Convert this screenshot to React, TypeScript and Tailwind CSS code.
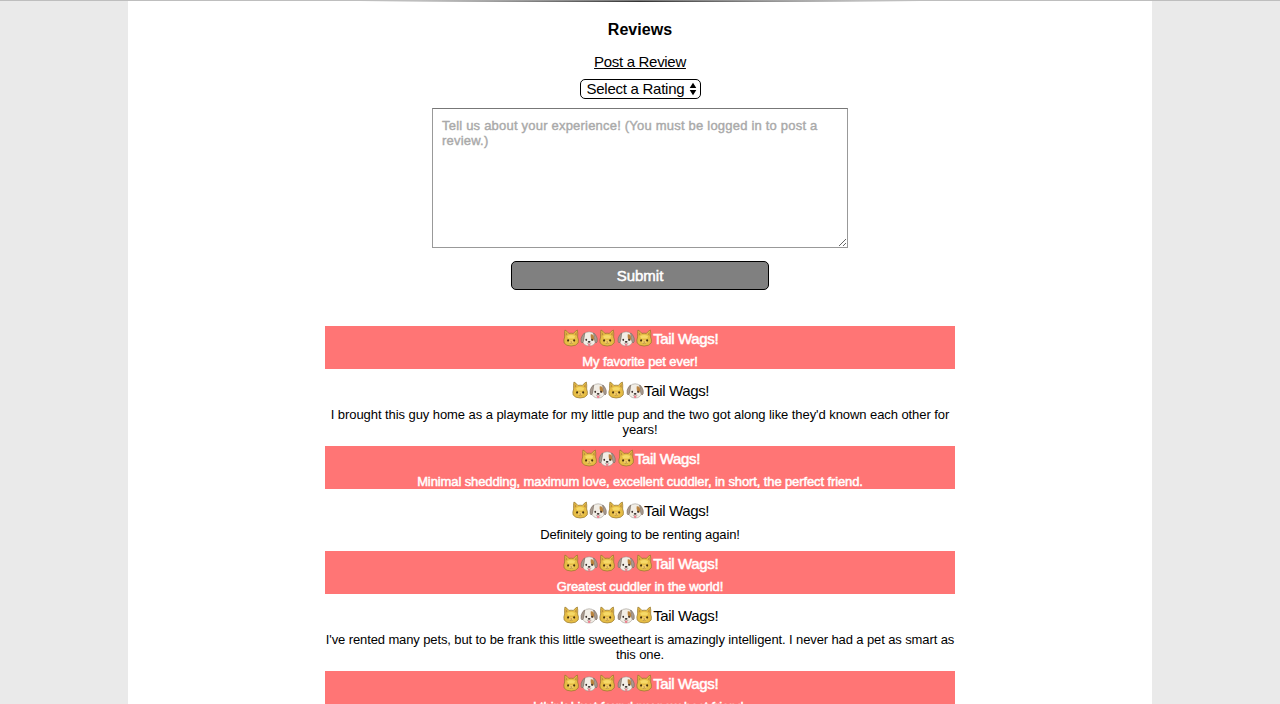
function Cat() {
  return (
    <svg viewBox="0 0 18 18" className="-mt-0.5 h-[18px] w-[18.3px] shrink-0" aria-hidden="true">
      <path d="M2.8 1Q5 2 6.7 4.4Q9 4 11.3 4.4Q13 2 15.2 1Q15.9 4 15.5 8Q16.8 11 16 14Q14 17 9 17Q4 17 2 14Q1.2 11 2.5 8Q2.1 4 2.8 1Z" fill="#e6bd45" stroke="#94742c" strokeWidth=".7" />
      <path d="M3.5 2.8L5.4 5.2L3.5 7ZM14.5 2.8L12.6 5.2L14.5 7Z" fill="#bd8e3d" />
      <path d="M5 7Q9 4.8 13 7L12 9.5H6Z" fill="#f6d967" />
      <ellipse cx="6" cy="11.4" rx="1" ry="1.2" fill="#46310f" />
      <ellipse cx="12" cy="11.4" rx="1" ry="1.2" fill="#46310f" />
      <ellipse cx="9" cy="13" rx="2.5" ry="1.9" fill="#f2cf68" />
      <path d="M8.2 12.4H9.8L9 13.3Z" fill="#a4563d" />
      <path d="M9 13.3V14M7.4 14.3Q8.4 14.9 9 14Q9.6 14.9 10.6 14.3" fill="none" stroke="#8a652a" strokeWidth=".5" />
    </svg>
  );
}

function Dog() {
  return (
    <svg viewBox="0 0 18 18" className="-mt-px h-[18px] w-[18.3px] shrink-0" aria-hidden="true">
      <path d="M4 3.8Q6 1.8 9 1.8Q12 1.8 14 3.8Q15.8 7 15.4 11.5Q14 16 9 16Q4 16 2.6 11.5Q2.2 7 4 3.8Z" fill="#f2eee6" stroke="#8d867f" strokeWidth=".5" />
      <path d="M4.5 3Q2.5 3.8 1 8.2Q.4 12.3 2 13Q3.4 12.5 4 7.5ZM13.5 3Q15.5 3.8 17 8.2Q17.6 12.3 16 13Q14.6 12.5 14 7.5Z" fill="#a99b8f" stroke="#776a60" strokeWidth=".6" />
      <path d="M10.6 4.2Q14 3.8 14 8.5Q13.8 11 12.4 10.8Q9.9 9 10.6 4.2Z" fill="#b9833d" />
      <ellipse cx="6.1" cy="9.8" rx=".9" ry="1.1" fill="#3d302b" />
      <ellipse cx="11.9" cy="9.8" rx=".9" ry="1.1" fill="#3d302b" />
      <ellipse cx="9" cy="11.8" rx="1.35" ry=".9" fill="#332b29" />
      <path d="M6.8 13.3Q8.3 13.9 9 12.7Q9.7 13.9 11.2 13.3" fill="none" stroke="#8a7a70" strokeWidth=".5" />
      <path d="M7.8 13.8H10.2V15.2Q9 17 7.8 15.2Z" fill="#ed8090" />
    </svg>
  );
}

const reviews = [
  { rating: 5, text: "My favorite pet ever!" },
  { rating: 4, text: "I brought this guy home as a playmate for my little pup and the two got along like they'd known each other for years!" },
  { rating: 3, text: "Minimal shedding, maximum love, excellent cuddler, in short, the perfect friend." },
  { rating: 4, text: "Definitely going to be renting again!" },
  { rating: 5, text: "Greatest cuddler in the world!" },
  { rating: 5, text: "I've rented many pets, but to be frank this little sweetheart is amazingly intelligent. I never had a pet as smart as this one." },
  { rating: 5, text: "I think I just found my new best friend." },
];

export default function App() {
  return (
    <div className="relative h-[704px] overflow-hidden bg-[#eaeaea] font-['Liberation_Sans',Arial,sans-serif] text-black">
      <div className="absolute inset-x-0 top-0 h-px bg-[#bebebe]" />
      <div className="absolute top-px left-[360px] h-px w-[560px] bg-linear-to-r from-transparent via-[#333333] to-transparent" />
      <div className="absolute top-0 left-[420px] h-px w-[440px] bg-linear-to-r from-transparent via-[#777777] to-transparent" />
      <main className="mx-auto flex h-full w-[1024px] flex-col items-center bg-white pt-5">
        <h1 className="text-[16px] leading-[19px] font-bold tracking-[0.05px]">Reviews</h1>
        <a href="#review" className="mt-[14px] text-[15px] leading-[18px] tracking-[-0.31px] underline underline-offset-1">Post a Review</a>
        <button className="mt-2 flex h-5 w-[121px] items-center justify-between rounded-[5px] border border-black pr-[3px] pl-1.5 text-[15px] leading-[18px] tracking-[-0.26px] whitespace-nowrap">
          <span>Select a Rating</span>
          <svg viewBox="0 0 8 14" className="h-3.5 w-2 shrink-0"><path d="M4 .7L7.3 6H.7ZM.7 8H7.3L4 13.3Z" fill="black" /></svg>
        </button>
        <textarea id="review" aria-label="Your review" className="mt-[9px] block h-[140px] w-[416px] shrink-0 resize rounded-none border border-[#999999] border-t-[#777777] px-[9px] py-[9px] text-[13px] leading-[15px] tracking-[0.21px] placeholder:text-[#a9a9a9] placeholder:[-webkit-text-stroke:0.4px]" placeholder="Tell us about your experience! (You must be logged in to post a review.)" />
        <button className="mt-[13px] h-[29px] w-[258px] shrink-0 rounded-[5px] border border-black bg-[#808080] text-[15px] leading-[18px] text-white [-webkit-text-stroke:0.5px]">Submit</button>
        <section className="mt-9 flex w-[630px] flex-col gap-[9px]">
          {reviews.map((review, index) => (
            <article key={index} className={index % 2 === 0 ? "bg-[#ff7575] pt-1 text-center text-white [-webkit-text-stroke:0.5px]" : "pt-1 text-center"}>
              <div className="flex h-[18px] items-center justify-center text-[15px] leading-[18px] tracking-[-0.36px]">
                {Array.from({ length: review.rating }, (_, position) => position % 2 === 0 ? <Cat key={position} /> : <Dog key={position} />)}
                <span>Tail Wags!</span>
              </div>
              <p className={`${index % 2 === 0 ? "mt-1.5" : "mt-[7px]"} ${index === 1 ? "tracking-[-0.07px]" : "tracking-[-0.11px]"} text-[13px] leading-[15px]`}>{review.text}</p>
            </article>
          ))}
        </section>
      </main>
    </div>
  );
}
